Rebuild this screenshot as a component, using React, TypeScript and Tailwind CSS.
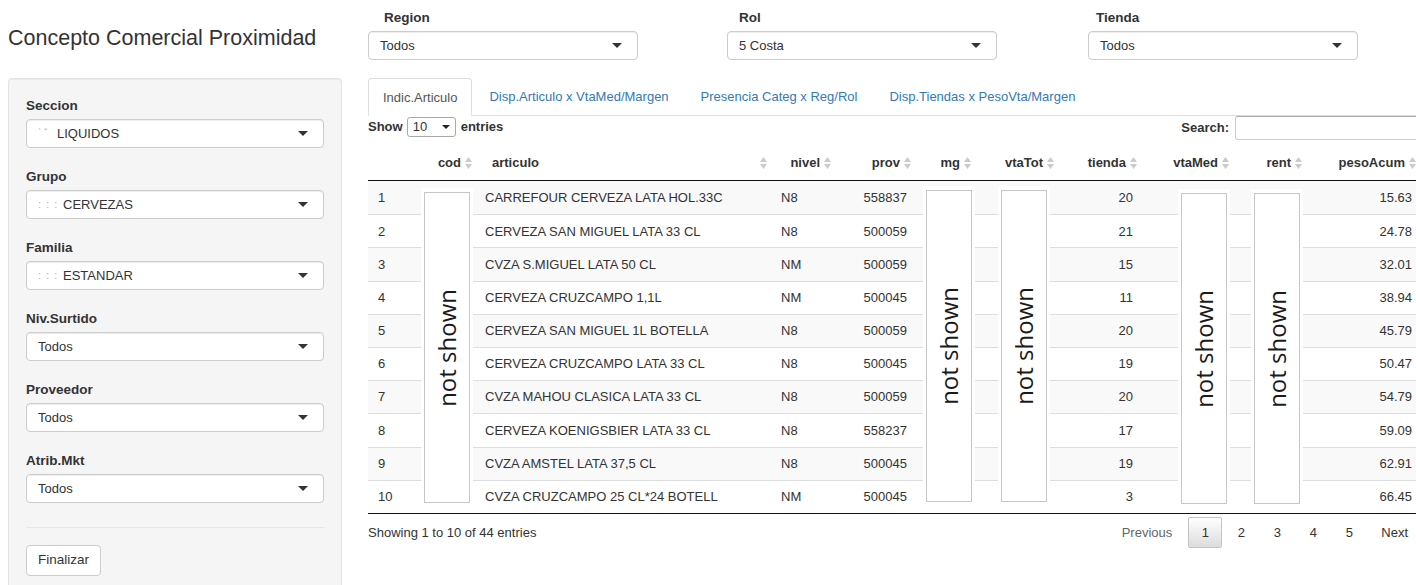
interface Row {
  n: number;
  art: string;
  nivel: string;
  prov: string;
  tienda: string;
  peso: string;
}

const rows: Row[] = [
  { n: 1, art: "CARREFOUR CERVEZA LATA HOL.33C", nivel: "N8", prov: "558837", tienda: "20", peso: "15.63" },
  { n: 2, art: "CERVEZA SAN MIGUEL LATA 33 CL", nivel: "N8", prov: "500059", tienda: "21", peso: "24.78" },
  { n: 3, art: "CVZA S.MIGUEL LATA 50 CL", nivel: "NM", prov: "500059", tienda: "15", peso: "32.01" },
  { n: 4, art: "CERVEZA CRUZCAMPO 1,1L", nivel: "NM", prov: "500045", tienda: "11", peso: "38.94" },
  { n: 5, art: "CERVEZA SAN MIGUEL 1L BOTELLA", nivel: "N8", prov: "500059", tienda: "20", peso: "45.79" },
  { n: 6, art: "CERVEZA CRUZCAMPO LATA 33 CL", nivel: "N8", prov: "500045", tienda: "19", peso: "50.47" },
  { n: 7, art: "CVZA MAHOU CLASICA LATA 33 CL", nivel: "N8", prov: "500059", tienda: "20", peso: "54.79" },
  { n: 8, art: "CERVEZA KOENIGSBIER LATA 33 CL", nivel: "N8", prov: "558237", tienda: "17", peso: "59.09" },
  { n: 9, art: "CVZA AMSTEL LATA 37,5 CL", nivel: "N8", prov: "500045", tienda: "19", peso: "62.91" },
  { n: 10, art: "CVZA CRUZCAMPO 25 CL*24 BOTELL", nivel: "NM", prov: "500045", tienda: "3", peso: "66.45" },
];

const cols = "grid grid-cols-[52px_57px_295px_64px_80px_60px_83px_83px_92px_73px_114px]";

function SortIcon() {
  return (
    <svg width="7" height="12" viewBox="0 0 7 12" className="shrink-0">
      <polygon points="3.5,0 7,5 0,5" fill="#cbcbcb" />
      <polygon points="0,7 7,7 3.5,12" fill="#cbcbcb" />
    </svg>
  );
}

function Caret() {
  return <span className="w-0 h-0 border-l-[5px] border-r-[5px] border-t-[5px] border-l-transparent border-r-transparent border-t-[#333]" />;
}

function Select({ children }: { children: React.ReactNode }) {
  return (
    <div className="flex items-center justify-between h-[29px] bg-white border border-[#ccc] rounded-[4px] pl-[11px] pr-[15px] shadow-[inset_0_1px_1px_rgba(0,0,0,0.075)] text-[13px] text-[#333]">
      <span className="flex items-center">{children}</span>
      <Caret />
    </div>
  );
}

function Field({ label, children }: { label: string; children: React.ReactNode }) {
  return (
    <div className="mb-[17px]">
      <div className="h-[20px] leading-[20px] mb-[5px] pt-[2px] font-bold text-[13.5px]">{label}</div>
      <Select>{children}</Select>
    </div>
  );
}

function Mask({ w }: { w: string }) {
  return <span className={`inline-block ${w} text-[#b5b5b5] text-[11px] tracking-[1px] leading-none`}>: : :</span>;
}

function TopFilter({ label, value, pad }: { label: string; value: string; pad: string }) {
  return (
    <div className="w-[270px]">
      <div className={`h-[20px] leading-[20px] mb-[4px] pt-[1px] font-bold text-[13.5px] ${pad}`}>{label}</div>
      <Select>{value}</Select>
    </div>
  );
}

function NotShown({ left, top, w, h }: { left: number; top: number; w: number; h: number }) {
  return (
    <div className="absolute bg-white px-[3px] py-[4px]" style={{ left: left - 3, top: top - 4, width: w + 6, height: h + 8 }}>
      <div className="w-full h-full bg-white border border-[#c6c6c6] flex items-center justify-center">
        <span className="[writing-mode:vertical-rl] rotate-180 text-[24px] text-[#1a1a1a] font-['Open_Sans',sans-serif] leading-none">not shown</span>
      </div>
    </div>
  );
}

function Th({ label, left }: { label: string; left?: boolean }) {
  if (left) {
    return (
      <div className="flex items-center justify-between pl-[15px] pr-[5px] pt-[2px]">
        <span>{label}</span>
        <SortIcon />
      </div>
    );
  }
  return (
    <div className="flex items-center justify-end gap-[4px] pr-[5px] pt-[2px]">
      <span>{label}</span>
      <SortIcon />
    </div>
  );
}

export default function App() {
  return (
    <div className="relative w-[1416px] h-[585px] overflow-hidden bg-white text-[#333] text-[13px] font-['Liberation_Sans',Arial,sans-serif]">
      <div className="flex">
        {/* sidebar */}
        <div className="w-[342px] pl-[8px] shrink-0">
          <div className="h-[78px] pt-[25px]">
            <h2 className="text-[21.5px] leading-[26px] font-normal">Concepto Comercial Proximidad</h2>
          </div>
          <div className="w-[334px] h-[540px] bg-[#f5f5f5] border border-[#e3e3e3] rounded-[4px] shadow-[inset_0_1px_1px_rgba(0,0,0,0.05)] px-[17px] pt-[15px]">
            <Field label="Seccion">
              <span className="inline-block w-[19px] text-[#aaa] text-[10px] leading-none">ˋ ˆ</span>LIQUIDOS
            </Field>
            <Field label="Grupo">
              <Mask w="w-[25px]" />CERVEZAS
            </Field>
            <Field label="Familia">
              <Mask w="w-[25px]" />ESTANDAR
            </Field>
            <Field label="Niv.Surtido">Todos</Field>
            <Field label="Proveedor">Todos</Field>
            <Field label="Atrib.Mkt">Todos</Field>
            <div className="mt-[24px] border-t border-[#e6e6e6]" />
            <button className="mt-[17px] h-[31px] px-[11px] bg-white border border-[#ccc] rounded-[4px] text-[13.5px] text-[#333]">Finalizar</button>
          </div>
        </div>

        {/* main */}
        <div className="ml-[26px] w-[1053px] shrink-0">
          <div className="flex pt-[7px]">
            <TopFilter label="Region" value="Todos" pad="pl-[16px]" />
            <div className="ml-[89px]">
              <TopFilter label="Rol" value="5 Costa" pad="pl-[12px]" />
            </div>
            <div className="ml-[91px]">
              <TopFilter label="Tienda" value="Todos" pad="pl-[8px]" />
            </div>
          </div>

          {/* tabs */}
          <div className="mt-[18px] flex h-[38px] border-b border-[#ddd] text-[13px]">
            <div className="-mb-px h-[38px] px-[14px] py-[9px] leading-[20px] bg-white border border-[#ddd] border-b-white rounded-t-[4px] text-[#555] mr-[2px]">Indic.Articulo</div>
            <div className="px-[15px] py-[9px] leading-[20px] text-[#337ab7] mr-[2px]">Disp.Articulo x VtaMed/Margen</div>
            <div className="px-[15px] py-[9px] leading-[20px] text-[#337ab7] mr-[2px]">Presencia Categ x Reg/Rol</div>
            <div className="px-[15px] py-[9px] leading-[20px] text-[#337ab7]">Disp.Tiendas x PesoVta/Margen</div>
          </div>

          {/* length / search */}
          <div className="flex justify-between items-start h-[28px]">
            <div className="flex items-center h-[21px] font-bold">
              <span>Show</span>
              <div className="ml-[4px] mr-[5px] w-[49px] h-[20px] border border-[#aaa] rounded-[3px] bg-white flex items-center justify-between pl-[5px] pr-[5px] font-normal">
                <span>10</span>
                <span className="w-0 h-0 border-l-[4px] border-r-[4px] border-t-[4px] border-l-transparent border-r-transparent border-t-[#222]" />
              </div>
              <span>entries</span>
            </div>
            <div className="flex items-center h-[24px] font-bold mr-[-40px]">
              <span className="mr-[6px]">Search:</span>
              <div className="w-[226px] h-[24px] border border-[#ccc] border-t-[#aaa] rounded-[3px] bg-white" />
            </div>
          </div>

          {/* table */}
          <div className={`${cols} h-[37px] border-b border-[#111] font-bold`}>
            <div />
            <Th label="cod" />
            <Th label="articulo" left />
            <Th label="nivel" />
            <Th label="prov" />
            <Th label="mg" />
            <Th label="vtaTot" />
            <Th label="tienda" />
            <Th label="vtaMed" />
            <Th label="rent" />
            <Th label="pesoAcum" />
          </div>
          <div className="relative border-b border-[#111]">
            {rows.map((r, i) => (
              <div
                key={r.n}
                className={`${cols} h-[33.2px] items-center ${i > 0 ? "border-t border-[#ddd]" : ""} ${i % 2 === 0 ? "bg-[#f9f9f9]" : "bg-white"}`}
              >
                <div className="pl-[10px]">{r.n}</div>
                <div />
                <div className="pl-[8px] whitespace-nowrap">{r.art}</div>
                <div className="pl-[9px]">{r.nivel}</div>
                <div className="pr-[9px] text-right">{r.prov}</div>
                <div />
                <div />
                <div className="pr-[9px] text-right">{r.tienda}</div>
                <div />
                <div />
                <div className="pr-[9px] text-right">{r.peso}</div>
              </div>
            ))}
            <NotShown left={56} top={11} w={46} h={311} />
            <NotShown left={558} top={9} w={46} h={312} />
            <NotShown left={633} top={9} w={46} h={312} />
            <NotShown left={813} top={12} w={46} h={311} />
            <NotShown left={886} top={12} w={46} h={311} />
          </div>

          {/* info / pagination */}
          <div className="flex justify-between items-start pt-[3px]">
            <div className="h-[31px] flex items-center">Showing 1 to 10 of 44 entries</div>
            <div className="flex items-center">
              <div className="h-[31px] px-[13px] flex items-center text-[#666] border border-transparent">Previous</div>
              <div className="ml-[2px] w-[34px] h-[31px] flex items-center justify-center border border-[#c4c4c4] rounded-[2px] bg-gradient-to-b from-white to-[#dcdcdc]">1</div>
              <div className="ml-[2px] w-[34px] h-[31px] flex items-center justify-center">2</div>
              <div className="ml-[2px] w-[34px] h-[31px] flex items-center justify-center">3</div>
              <div className="ml-[2px] w-[34px] h-[31px] flex items-center justify-center">4</div>
              <div className="ml-[2px] w-[34px] h-[31px] flex items-center justify-center">5</div>
              <div className="ml-[2px] h-[31px] px-[13px] flex items-center">Next</div>
            </div>
          </div>
        </div>
      </div>
    </div>
  );
}
